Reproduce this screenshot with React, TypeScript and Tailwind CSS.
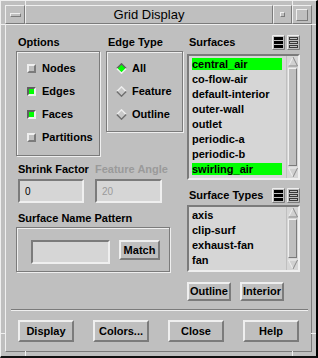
import React from 'react'

const raised = 'border-2 border-t-[#efefef] border-l-[#efefef] border-r-[#7b7b7b] border-b-[#7b7b7b]'
const raised1 = 'border border-t-[#efefef] border-l-[#efefef] border-r-[#7b7b7b] border-b-[#7b7b7b]'
const sunken = 'border-2 border-t-[#7b7b7b] border-l-[#7b7b7b] border-r-[#efefef] border-b-[#efefef]'
const etched = 'border border-[#7b7b7b] shadow-[inset_1px_1px_0_#efefef,1px_1px_0_#efefef]'

function Label({ children, dim }: { children: React.ReactNode; dim?: boolean }) {
  return (
    <div
      className={`h-[13px] leading-[13px] text-[11px] font-bold whitespace-nowrap pl-[2px] ${
        dim ? 'text-[#9a9a9a]' : 'text-black'
      }`}
    >
      {children}
    </div>
  )
}

function Check({ on, label }: { on?: boolean; label: string }) {
  return (
    <div className="h-[23px] flex items-center pl-[10px]">
      <span
        className={`w-[9px] h-[9px] border-2 ${
          on
            ? 'border-t-[#5f5f5f] border-l-[#5f5f5f] border-r-[#efefef] border-b-[#efefef] bg-[#00ff00]'
            : 'border-t-[#efefef] border-l-[#efefef] border-r-[#7b7b7b] border-b-[#7b7b7b] bg-[#bfbfbf]'
        }`}
      />
      <span className="ml-[6px] text-[11px] font-bold leading-[13px]">{label}</span>
    </div>
  )
}

function Radio({ on, label }: { on?: boolean; label: string }) {
  return (
    <div className="h-[23px] flex items-center pl-[9px]">
      <svg width="11" height="11" viewBox="0 0 11 11">
        <polygon points="5.5,1 10,5.5 5.5,10 1,5.5" fill={on ? '#00ff00' : '#c8c8c8'} />
        <polyline
          points="0.8,5.5 5.5,0.8 10.2,5.5"
          fill="none"
          stroke={on ? '#5f5f5f' : '#efefef'}
          strokeWidth="1.4"
        />
        <polyline
          points="0.8,5.5 5.5,10.2 10.2,5.5"
          fill="none"
          stroke={on ? '#efefef' : '#6f6f6f'}
          strokeWidth="1.4"
        />
      </svg>
      <span className="ml-[5px] text-[11px] font-bold leading-[13px]">{label}</span>
    </div>
  )
}

function SelIcon({ filled }: { filled?: boolean }) {
  return (
    <svg width="13" height="15" viewBox="0 0 13 15" className="block">
      <rect x="0" y="0" width="13" height="15" fill="#bfbfbf" />
      <path d="M0.5 14.5V0.5H12.5" fill="none" stroke="#efefef" />
      <path d="M12.5 0.5V14.5H0.5" fill="none" stroke="#7b7b7b" />
      {filled ? (
        <>
          <rect x="2" y="2" width="9" height="3" fill="#000" />
          <rect x="2" y="6" width="9" height="3" fill="#000" />
          <rect x="2" y="10" width="9" height="3" fill="#000" />
        </>
      ) : (
        <>
          <rect x="2.5" y="2.5" width="8" height="2" fill="none" stroke="#3a3a3a" />
          <rect x="2.5" y="6.5" width="8" height="2" fill="none" stroke="#3a3a3a" />
          <rect x="2.5" y="10.5" width="8" height="2" fill="none" stroke="#3a3a3a" />
        </>
      )}
    </svg>
  )
}

function Arrow({ down }: { down?: boolean }) {
  return (
    <svg width="10" height="11" viewBox="0 0 10 11" className="block">
      {down ? (
        <>
          <polygon points="5,10 9.5,1 0.5,1" fill="#d0d0d0" />
          <path d="M0.5 1H9.5" stroke="#efefef" />
          <path d="M0.5 1L5 10" stroke="#efefef" />
          <path d="M9.5 1L5 10" stroke="#8a8a8a" />
        </>
      ) : (
        <>
          <polygon points="5,1 9.5,10 0.5,10" fill="#d0d0d0" />
          <path d="M5 1L0.5 10" stroke="#efefef" />
          <path d="M5 1L9.5 10" stroke="#8a8a8a" />
          <path d="M0.5 10H9.5" stroke="#8a8a8a" />
        </>
      )}
    </svg>
  )
}

function List({ items, sel, box }: { items: string[]; sel: string[]; box: string }) {
  return (
    <div className={`${sunken} bg-[#d6d6d6] flex ${box}`}>
      <div className="w-[97px] pl-[3px] pr-[4px] pt-[2px] overflow-hidden">
        {items.map((it) => (
          <div
            key={it}
            className={`h-[12px] leading-[12px] mb-[3px] text-[11px] font-bold whitespace-nowrap ${
              sel.includes(it) ? 'bg-[#00ff00]' : ''
            }`}
          >
            {it}
          </div>
        ))}
      </div>
      <div className="w-[12px] flex flex-col border-l border-l-[#bfbfbf] pl-[1px]">
        <Arrow />
        <div className={`flex-1 my-[1px] ${raised1} bg-[#bfbfbf] w-[9px]`} />
        <Arrow down />
      </div>
    </div>
  )
}

function Btn({ children, w, h }: { children: React.ReactNode; w: string; h: string }) {
  return (
    <button
      className={`${raised} bg-[#bfbfbf] ${w} ${h} flex items-center justify-center text-[11px] font-bold leading-none text-black`}
    >
      {children}
    </button>
  )
}

export default function App() {
  return (
    <div className="relative w-[318px] h-[358px] bg-[#bfbfbf] font-['Liberation_Sans',Arial,sans-serif] text-black border-t border-l border-t-[#efefef] border-l-[#efefef] border-r-2 border-b-2 border-r-black border-b-[#111] p-[4px]">
      {/* frame resize ticks */}
      <div className="absolute left-[24px] top-0 w-px h-[5px] bg-[#efefef]" />
      <div className="absolute left-0 top-[23px] h-px w-[5px] bg-[#efefef]" />
      <div className="absolute left-[291px] top-0 w-px h-[5px] bg-[#efefef]" />
      <div className="absolute right-0 top-[23px] h-px w-[5px] bg-[#efefef]" />
      <div className="absolute left-0 top-[332px] h-px w-[5px] bg-[#efefef]" />
      <div className="absolute right-0 top-[332px] h-px w-[5px] bg-[#efefef]" />
      <div className="absolute left-[24px] bottom-0 w-px h-[5px] bg-[#efefef]" />
      <div className="absolute left-[291px] bottom-0 w-px h-[5px] bg-[#efefef]" />

      {/* title bar */}
      <div className="flex h-[19px]">
        <div className={`w-[20px] ${raised1} flex items-center justify-center`}>
          <div className={`w-[11px] h-[4px] ${raised1}`} />
        </div>
        <div className={`flex-1 ${raised1} flex items-center justify-center text-[13px] leading-none`}>
          Grid Display
        </div>
        <div className={`w-[19px] ${raised1} flex items-center justify-center`}>
          <div className={`w-[5px] h-[5px] ${raised1}`} />
        </div>
        <div className={`w-[20px] ${raised1} flex items-center justify-center`}>
          <div className={`w-[12px] h-[12px] ${raised1}`} />
        </div>
      </div>

      {/* dialog body */}
      <div className={`h-[328px] ${raised1} pt-[10px] pl-[10px] pr-[10px]`}>
        <div className="flex gap-[4px]">
          {/* left region */}
          <div className="w-[167px] flex flex-col">
            <div className="flex gap-[6px] mt-[1px]">
              <div className="w-[84px]">
                <Label>Options</Label>
                <div className={`mt-[2px] h-[105px] ${etched} pt-[5px]`}>
                  <Check label="Nodes" />
                  <Check on label="Edges" />
                  <Check on label="Faces" />
                  <Check label="Partitions" />
                </div>
              </div>
              <div className="w-[77px]">
                <Label>Edge Type</Label>
                <div className={`mt-[2px] h-[81px] ${etched} pt-[5px]`}>
                  <Radio on label="All" />
                  <Radio label="Feature" />
                  <Radio label="Outline" />
                </div>
              </div>
            </div>

            <div className="flex mt-[7px] gap-[9px]">
              <div className="w-[68px]">
                <Label>Shrink Factor</Label>
                <div className={`mt-[3px] ml-[2px] w-[66px] h-[24px] ${sunken} bg-[#d6d6d6] pl-[5px] flex items-center text-[10px]`}>
                  0
                </div>
              </div>
              <div className="w-[69px]">
                <Label dim>Feature Angle</Label>
                <div className={`mt-[3px] ml-[2px] w-[67px] h-[24px] ${sunken} bg-[#d6d6d6] pl-[5px] flex items-center text-[10px] text-[#9a9a9a]`}>
                  20
                </div>
              </div>
            </div>

            <div className="mt-[9px]">
              <Label>Surface Name Pattern</Label>
            </div>
            <div className={`mt-[2px] w-[154px] h-[45px] ${etched} pl-[14px] pt-[12px] flex items-start`}>
              <div className={`w-[79px] h-[24px] ${sunken} bg-[#d6d6d6]`} />
              <div className="ml-[9px]">
                <Btn w="w-[41px]" h="h-[20px]">Match</Btn>
              </div>
            </div>
          </div>

          {/* right region */}
          <div className="w-[113px] flex flex-col">
            <div className="flex items-center h-[15px]">
              <div className="flex-1">
                <Label>Surfaces</Label>
              </div>
              <SelIcon filled />
              <div className="ml-[2px]">
                <SelIcon />
              </div>
            </div>
            <List
              box="mt-[4px] h-[126px]"
              items={[
                'central_air',
                'co-flow-air',
                'default-interior',
                'outer-wall',
                'outlet',
                'periodic-a',
                'periodic-b',
                'swirling_air',
              ]}
              sel={['central_air', 'swirling_air']}
            />
            <div className="flex items-center h-[15px] mt-[8px]">
              <div className="flex-1">
                <Label>Surface Types</Label>
              </div>
              <SelIcon filled />
              <div className="ml-[2px]">
                <SelIcon />
              </div>
            </div>
            <List
              box="mt-[2px] h-[67px]"
              items={['axis', 'clip-surf', 'exhaust-fan', 'fan']}
              sel={[]}
            />
            <div className="flex gap-[9px] mt-[10px]">
              <Btn w="w-[44px]" h="h-[19px]">Outline</Btn>
              <Btn w="w-[44px]" h="h-[19px]">Interior</Btn>
            </div>
          </div>
        </div>

        {/* separator */}
        <div className="mt-[8px] -ml-[5px] -mr-[7px] h-[2px] border-t border-t-[#7b7b7b] border-b border-b-[#efefef]" />

        <div className="flex gap-[19px] pl-[2px] mt-[9px]">
          <Btn w="w-[56px]" h="h-[22px]">Display</Btn>
          <Btn w="w-[56px]" h="h-[22px]">Colors...</Btn>
          <Btn w="w-[56px]" h="h-[22px]">Close</Btn>
          <Btn w="w-[56px]" h="h-[22px]">Help</Btn>
        </div>
      </div>
    </div>
  )
}
